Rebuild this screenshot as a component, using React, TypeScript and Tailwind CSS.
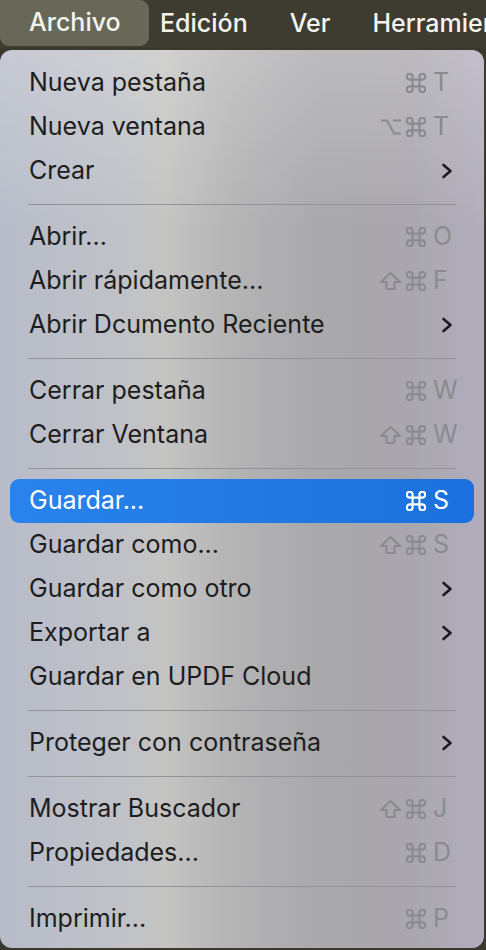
import React from "react";

type Item =
  | { type: "sep" }
  | { type: "item"; label: string; mods?: string[]; keyChar?: string; sub?: boolean; active?: boolean };

const items: Item[] = [
  { type: "item", label: "Nueva pestaña", mods: ["⌘"], keyChar: "T" },
  { type: "item", label: "Nueva ventana", mods: ["⌥", "⌘"], keyChar: "T" },
  { type: "item", label: "Crear", sub: true },
  { type: "sep" },
  { type: "item", label: "Abrir...", mods: ["⌘"], keyChar: "O" },
  { type: "item", label: "Abrir rápidamente...", mods: ["⇧", "⌘"], keyChar: "F" },
  { type: "item", label: "Abrir Dcumento Reciente", sub: true },
  { type: "sep" },
  { type: "item", label: "Cerrar pestaña", mods: ["⌘"], keyChar: "W" },
  { type: "item", label: "Cerrar Ventana", mods: ["⇧", "⌘"], keyChar: "W" },
  { type: "sep" },
  { type: "item", label: "Guardar...", mods: ["⌘"], keyChar: "S", active: true },
  { type: "item", label: "Guardar como...", mods: ["⇧", "⌘"], keyChar: "S" },
  { type: "item", label: "Guardar como otro", sub: true },
  { type: "item", label: "Exportar a", sub: true },
  { type: "item", label: "Guardar en UPDF Cloud" },
  { type: "sep" },
  { type: "item", label: "Proteger con contraseña", sub: true },
  { type: "sep" },
  { type: "item", label: "Mostrar Buscador", mods: ["⇧", "⌘"], keyChar: "J" },
  { type: "item", label: "Propiedades...", mods: ["⌘"], keyChar: "D" },
  { type: "sep" },
  { type: "item", label: "Imprimir...", mods: ["⌘"], keyChar: "P" },
];

function Mod({ m, active }: { m: string; active?: boolean }) {
  const color = active ? "#ffffff" : "#8a8a8f";
  if (m === "⌘") {
    return (
      <svg width="20" height="20" viewBox="1.2 1.2 17.6 17.6" fill="none" stroke={color} strokeWidth="1.9">
        <path d="M7 7 H13 V13 H7 Z" />
        <path d="M7 7 V4.8 A2.6 2.6 0 1 0 4.8 7 H7" />
        <path d="M13 7 V4.8 A2.6 2.6 0 1 1 15.2 7 H13" />
        <path d="M7 13 V15.2 A2.6 2.6 0 1 1 4.8 13 H7" />
        <path d="M13 13 V15.2 A2.6 2.6 0 1 0 15.2 13 H13" />
      </svg>
    );
  }
  if (m === "⇧") {
    return (
      <svg width="23" height="20" viewBox="0 0 23 20" fill="none" stroke={color} strokeWidth="2.1" strokeLinejoin="round">
        <path d="M11.5 2 L21 11 H15.5 V18 H7.5 V11 H2 Z" />
      </svg>
    );
  }
  return (
    <svg width="22" height="18" viewBox="0 0 22 18" fill="none" stroke={color} strokeWidth="2.1">
      <path d="M1 2.5 H7 L14 15.5 H21" />
      <path d="M13 2.5 H21" />
    </svg>
  );
}

function Chevron() {
  return (
    <svg width="12" height="16" viewBox="0 0 12 16" fill="none" stroke="#1c1c1e" strokeWidth="2.6" strokeLinecap="round" strokeLinejoin="round">
      <path d="M2.5 2 L9.5 8 L2.5 14" />
    </svg>
  );
}

export default function App() {
  const font = { fontFamily: "Inter, 'Noto Sans', sans-serif" };
  return (
    <div className="w-[486px] h-[950px] overflow-hidden bg-[#3b392e]" style={font}>
      {/* menu bar */}
      <div className="h-[48px] flex items-center bg-[#3e3c31] text-[#f4f4ee] text-[25px] font-medium whitespace-nowrap overflow-hidden">
        <div className="shrink-0 h-[46px] -mt-[2px] w-[149px] pl-[29px] flex items-center rounded-b-[9px] rounded-tr-[9px] bg-[#686859]">
          Archivo
        </div>
        <div className="shrink-0 ml-[11px]">Edición</div>
        <div className="shrink-0 ml-[42px]">Ver</div>
        <div className="shrink-0 ml-[42px]">Herramientas</div>
      </div>
      {/* menu */}
      <div className="mt-[2px] w-[484px] h-[898px] rounded-[12px] pt-[11px] bg-[linear-gradient(180deg,rgba(255,255,255,0.22)_0%,rgba(255,255,255,0)_20%),linear-gradient(90deg,#b8bcc9_0%,#bfc1c8_22%,#c4c4c3_34%,#b4b4b5_48%,#a9a8ab_66%,#a9a7ad_85%,#b1adbd_100%)]">
        {items.map((it, i) =>
          it.type === "sep" ? (
            <div key={i} className="h-[22px] flex items-center px-[28px]">
              <div className="h-px w-full bg-[#939397]" />
            </div>
          ) : (
            <div
              key={i}
              className={
                "h-[44px] mx-[10px] pl-[19px] flex items-center rounded-[9px] text-[25px] " +
                (it.active
                  ? "bg-[linear-gradient(90deg,#2a83ec,#1a70dc)] text-white"
                  : "text-[#1d1d20]")
              }
            >
              <div className="flex-1 whitespace-nowrap">{it.label}</div>
              {it.keyChar ? (
                <div className="flex items-center">
                  <div className="flex items-center gap-[4px] mr-[7px]">
                    {it.mods!.map((m, j) => (
                      <Mod key={j} m={m} active={it.active} />
                    ))}
                  </div>
                  <div
                    className={
                      "w-[41px] text-[25px] " + (it.active ? "text-white" : "text-[#8a8a8f]")
                    }
                  >
                    {it.keyChar}
                  </div>
                </div>
              ) : it.sub ? (
                <div className="w-[41px] pl-[8px] flex items-center">
                  <Chevron />
                </div>
              ) : null}
            </div>
          )
        )}
      </div>
    </div>
  );
}
